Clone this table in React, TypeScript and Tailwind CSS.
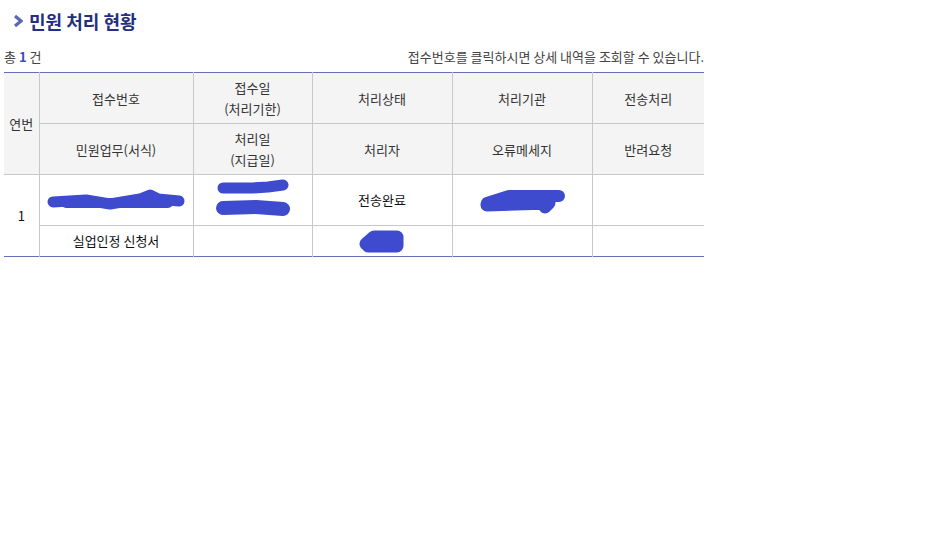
import React from 'react'

const font = { fontFamily: '"Noto Sans CJK KR", "Noto Sans", sans-serif' }

function Scribble({ w, h, children }: { w: number; h: number; children: React.ReactNode }) {
  return (
    <svg width={w} height={h} viewBox={`0 0 ${w} ${h}`} className="inline-block align-middle">
      <g fill="none" stroke="#3e4bcf" strokeLinecap="round" strokeLinejoin="round">
        {children}
      </g>
    </svg>
  )
}

export default function App() {
  const th = 'border-x border-[#c8c8c8] bg-[#f4f4f4] font-normal text-[#333] text-center align-middle leading-[21px]'
  const td = 'border border-[#c8c8c8] text-center align-middle text-[#111] font-normal'

  return (
    <div className="w-[947px] h-[540px] bg-white text-[13px]" style={font}>
      <div className="w-[700px] ml-[4px]">
        {/* 제목 */}
        <h2 className="flex items-center gap-[6px] pl-[9px] pt-[7px] h-[42px] pb-[7px] text-[18px] font-bold text-[#233080]">
          <svg width="10" height="14" viewBox="0 0 10 14">
            <path d="M2 2 L8 7 L2 12" fill="none" stroke="#5a67b2" strokeWidth="3.2" />
          </svg>
          민원 처리 현황
        </h2>

        <div className="flex justify-between items-center h-[30px] text-[#444]">
          <span>
            총 <b className="text-[#3d4cb5]">1</b> 건
          </span>
          <span>접수번호를 클릭하시면 상세 내역을 조회할 수 있습니다.</span>
        </div>

        <table className="w-[700px] table-fixed border-collapse border-t border-b border-t-[#6670b8] border-b-[#6670b8]">
          <colgroup>
            <col className="w-[35px]" />
            <col className="w-[154px]" />
            <col className="w-[119px]" />
            <col className="w-[140px]" />
            <col className="w-[140px]" />
            <col className="w-[112px]" />
          </colgroup>
          <thead>
            <tr className="h-[51px]">
              <th rowSpan={2} className={`${th} border-l-0 border-b border-b-[#c8c8c8]`}>연번</th>
              <th className={`${th} border-b border-b-[#c8c8c8]`}>접수번호</th>
              <th className={`${th} border-b border-b-[#c8c8c8]`}>접수일<br />(처리기한)</th>
              <th className={`${th} border-b border-b-[#c8c8c8]`}>처리상태</th>
              <th className={`${th} border-b border-b-[#c8c8c8]`}>처리기관</th>
              <th className={`${th} border-r-0 border-b border-b-[#c8c8c8]`}>전송처리</th>
            </tr>
            <tr className="h-[51px]">
              <th className={`${th} border-b border-b-[#c8c8c8]`}>민원업무(서식)</th>
              <th className={`${th} border-b border-b-[#c8c8c8]`}>처리일<br />(지급일)</th>
              <th className={`${th} border-b border-b-[#c8c8c8]`}>처리자</th>
              <th className={`${th} border-b border-b-[#c8c8c8]`}>오류메세지</th>
              <th className={`${th} border-r-0 border-b border-b-[#c8c8c8]`}>반려요청</th>
            </tr>
          </thead>
          <tbody>
            <tr className="h-[51px]">
              <td rowSpan={2} className={`${td} border-l-0 border-b-0`}>1</td>
              <td className={td}>
                <Scribble w={140} h={26}>
                  <path d="M7 15 L40 13 L64 17 L94 12 L104 8 L112 12 L133 14" strokeWidth="11" />
                  <path d="M20 16 L122 16" strokeWidth="10" />
                </Scribble>
              </td>
              <td className={td}>
                <Scribble w={74} h={42}>
                  <path d="M7 9 L36 9 L52 8 L67 6" strokeWidth="11" />
                  <path d="M7 29 L40 28 L67 30" strokeWidth="14" />
                </Scribble>
              </td>
              <td className={td}>전송완료</td>
              <td className={td}>
                <Scribble w={86} h={28}>
                  <path d="M8 17 L30 10 L80 10" strokeWidth="12" />
                  <path d="M8 19 L70 17 L66 21" strokeWidth="13" />
                </Scribble>
              </td>
              <td className={`${td} border-r-0`}></td>
            </tr>
            <tr className="h-[31px]">
              <td className={`${td} border-b-0`}>실업인정 신청서</td>
              <td className={`${td} border-b-0`}></td>
              <td className={`${td} border-b-0`}>
                <Scribble w={48} h={26}>
                  <path d="M8 16 L16 9 L39 9 L39 18 L10 18" strokeWidth="13" />
                </Scribble>
              </td>
              <td className={`${td} border-b-0`}></td>
              <td className={`${td} border-r-0 border-b-0`}></td>
            </tr>
          </tbody>
        </table>
      </div>
    </div>
  )
}
